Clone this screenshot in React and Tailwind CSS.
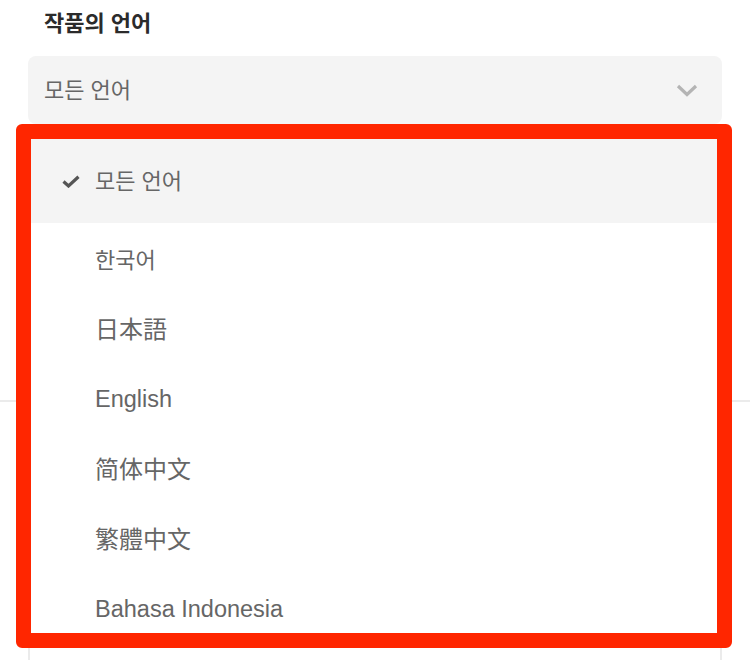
import React from 'react';

const kr = { fontFamily: '"Liberation Sans", "Noto Sans CJK KR", sans-serif' };

const languages = [
    { label: '한국어', font: '"Liberation Sans", "Noto Sans CJK KR", sans-serif', size: 'text-[22px]' },
    { label: '日本語', font: '"Liberation Sans", "Noto Sans CJK JP", sans-serif', size: 'text-[24px]' },
    { label: 'English', font: '"Liberation Sans", sans-serif', size: 'text-[23.5px]' },
    { label: '简体中文', font: '"Liberation Sans", "Noto Sans CJK SC", sans-serif', size: 'text-[24px]' },
    { label: '繁體中文', font: '"Liberation Sans", "Noto Sans CJK TC", sans-serif', size: 'text-[24px]' },
    { label: 'Bahasa Indonesia', font: '"Liberation Sans", sans-serif', size: 'text-[23.5px]' },
];

function CheckIcon() {
    return (
        <svg width="18" height="13" viewBox="0 0 18 13" className="shrink-0">
            <path d="M1.5 6.5 L6.5 11 L16.5 1.8" fill="none" stroke="#555" strokeWidth="3.2" strokeLinejoin="miter" />
        </svg>
    );
}

function Chevron() {
    return (
        <svg width="22" height="13" viewBox="0 0 22 13">
            <path d="M2 2 L11 10.5 L20 2" fill="none" stroke="#b4b4b4" strokeWidth="3.2" />
        </svg>
    );
}

export default function App() {
    return (
        <div className="relative h-[660px] w-[750px] overflow-hidden bg-white" style={kr}>
            {/* Field label */}
            <h3 className="pl-[44px] pt-[10px] text-[22px] font-bold leading-[28px] text-[#2b2b2b]">
                작품의 언어
            </h3>

            {/* Select trigger */}
            <div className="mx-[28px] mt-[18px] flex h-[68px] items-center justify-between rounded-lg bg-[#f4f4f4] pl-4 pr-[24px]">
                <span className="text-[22px] text-[#666]">모든 언어</span>
                <Chevron />
            </div>

            {/* Content underneath the menu */}
            <div className="mt-[276px] h-[2px] w-full bg-[#ebebeb]" />
            <div className="mx-[28px] mt-[20px] h-[300px] border-x-2 border-[#ebebeb]" />

            {/* Dropdown menu */}
            <div className="absolute left-[16px] top-[124px] h-[524px] w-[716px] overflow-hidden rounded-md border-[15px] border-[#ff2600] bg-white">
                <div className="flex h-[84px] items-center gap-[15px] bg-[#f4f4f4] pl-[31px] pt-[1px]">
                    <CheckIcon />
                    <span className="text-[22px] text-[#666]">모든 언어</span>
                </div>
                {languages.map((lang) => (
                    <div key={lang.label} className="flex h-[70px] items-center pl-[64px] pt-[4px]">
                        <span className={`${lang.size} text-[#666]`} style={{ fontFamily: lang.font }}>
                            {lang.label}
                        </span>
                    </div>
                ))}
            </div>
        </div>
    );
}
